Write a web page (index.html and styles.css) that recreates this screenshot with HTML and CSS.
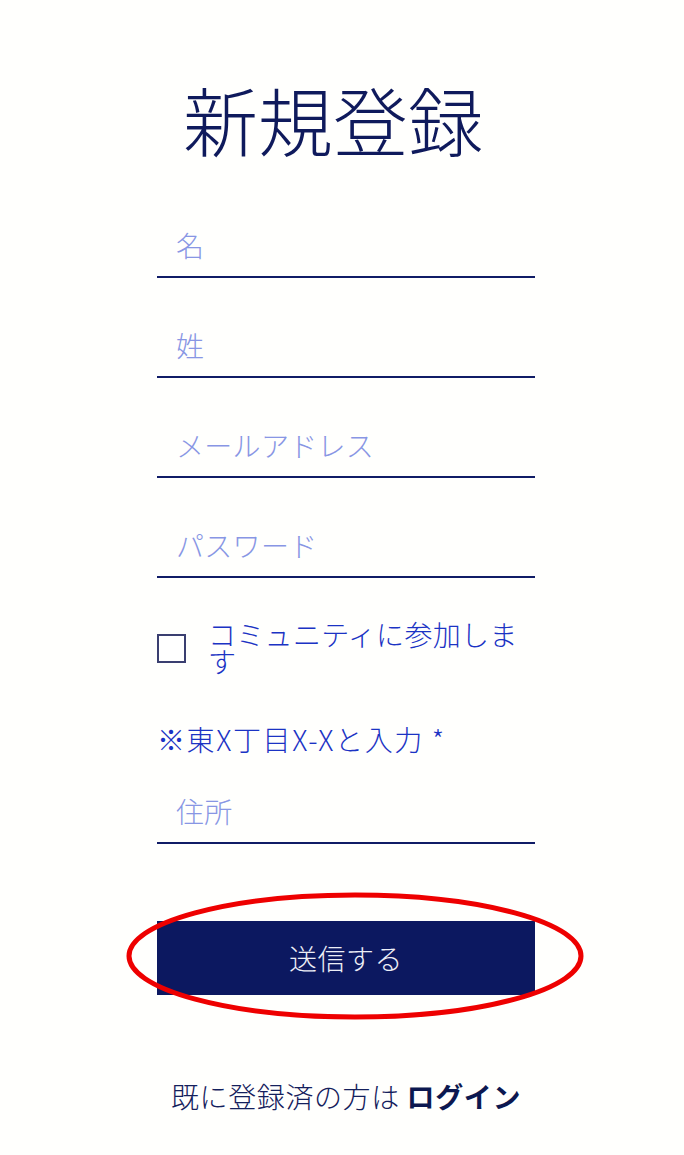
FILE: index.html
```html
<!DOCTYPE html>
<html lang="ja">
<head>
<meta charset="utf-8">
<title>新規登録</title>
<link rel="stylesheet" href="styles.css">
</head>
<body>
<main class="page">
  <h1 class="title">新規登録</h1>
  <form class="form">
    <input class="field" type="text" placeholder="名">
    <input class="field" type="text" placeholder="姓">
    <input class="field" type="email" placeholder="メールアドレス">
    <input class="field" type="password" placeholder="パスワード">
    <label class="check">
      <span class="box"></span>
      <span class="check-text">コミュニティに参加します</span>
    </label>
    <p class="note">※東X丁目X-Xと入力 *</p>
    <input class="field field-addr" type="text" placeholder="住所">
    <div class="submit-wrap">
      <button class="submit" type="button">送信する</button>
      <svg class="ring" width="464" height="134" viewBox="0 0 464 134" aria-hidden="true">
        <ellipse cx="232" cy="67" rx="226" ry="61" fill="none" stroke="#ee0000" stroke-width="5"/>
      </svg>
    </div>
  </form>
  <p class="login">既に登録済の方は <b>ログイン</b></p>
</main>
</body>
</html>
```
FILE: styles.css
```css
* { box-sizing: border-box; }
body {
  margin: 0;
  background: #fffffd;
  font-family: "Noto Sans CJK JP", "Noto Sans", sans-serif;
}
.page {
  width: 378px;
  margin-left: 157px;
  padding-top: 72px;
}
.title {
  margin: 0 0 0 -26px;
  text-align: center;
  font-size: 75px;
  font-weight: 300;
  line-height: 94px;
  color: #0f1a5c;
  letter-spacing: 0;
}
.form {
  display: flex;
  flex-direction: column;
  margin-top: 51px;
}
.field {
  display: block;
  width: 100%;
  height: 61px;
  margin: 0 0 39px;
  padding: 0 0 3px 19px;
  border: 0;
  border-bottom: 2px solid #101c66;
  background: transparent;
  font-family: inherit;
  font-size: 28px;
  font-weight: 300;
  letter-spacing: 0.3px;
  color: #0c1a64;
  outline: none;
}
.field::placeholder { color: #8896e4; }
.check {
  display: flex;
  align-items: center;
  gap: 22px;
  margin-top: 4px;
}
.box {
  flex: none;
  width: 29px;
  height: 29px;
  border: 2px solid #3a3f70;
  background: #fff;
}
.check-text {
  font-size: 28px;
  line-height: 27px;
  letter-spacing: 0.3px;
  color: #1b33c4;
  font-weight: 300;
}
.note {
  margin: 46px 0 0;
  font-size: 28px;
  line-height: 36px;
  letter-spacing: 1.6px;
  color: #1b33c4;
  font-weight: 300;
}
.field-addr { margin-top: 26px; margin-bottom: 0; }
.submit-wrap {
  position: relative;
  margin-top: 77px;
}
.submit {
  display: block;
  width: 100%;
  height: 74px;
  border: 0;
  background: #0c1860;
  color: #eceef6;
  font-family: inherit;
  font-size: 28px;
  font-weight: 300;
  letter-spacing: 0.5px;
}
.ring {
  position: absolute;
  left: -34px;
  top: -32px;
  pointer-events: none;
}
.login {
  margin: 83px 0 0;
  text-align: center;
  font-size: 28px;
  line-height: 36px;
  letter-spacing: 0.6px;
  color: #14205c;
  font-weight: 300;
}
.login b { font-weight: 700; color: #0c1850; }
```
